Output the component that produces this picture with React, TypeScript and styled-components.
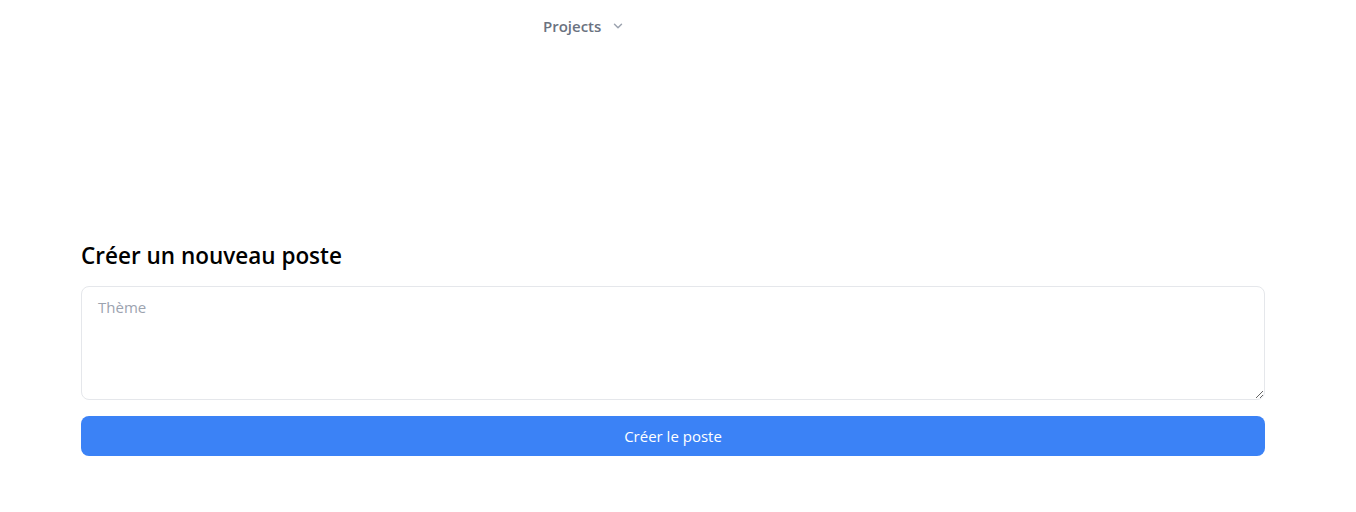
import React from "react";
import styled, { createGlobalStyle } from "styled-components";

const Global = createGlobalStyle`
  html, body { margin: 0; padding: 0; background: #ffffff; }
  body { font-family: "Open Sans", "Noto Sans", sans-serif; color: #111827; }
  * { box-sizing: border-box; }
`;

const Page = styled.div`
  width: 1356px;
  min-height: 512px;
  display: flex;
  flex-direction: column;
`;

const Nav = styled.nav`
  height: 52px;
  display: flex;
  align-items: center;
  padding-left: 543px;
`;

const NavItem = styled.button`
  display: flex;
  align-items: center;
  gap: 10px;
  background: none;
  border: none;
  padding: 0;
  font-family: inherit;
  font-size: 15px;
  font-weight: 600;
  color: #6b7280;
  cursor: pointer;
`;

const Main = styled.main`
  padding: 188px 91px 0 81px;
  display: flex;
  flex-direction: column;
`;

const Title = styled.h2`
  margin: 0 0 15px;
  font-size: 22.5px;
  font-weight: 600;
  line-height: 31px;
  color: #000000;
`;

const Form = styled.form`
  display: flex;
  flex-direction: column;
  gap: 16px;
`;

const Area = styled.textarea`
  height: 114px;
  border: 1px solid #e5e7eb;
  border-radius: 8px;
  padding: 9px 16px;
  font-family: inherit;
  font-size: 15px;
  line-height: 22px;
  color: #111827;
  outline: none;
  &::placeholder { color: #9ca3af; }
`;

const Submit = styled.button`
  height: 40px;
  border: none;
  border-radius: 8px;
  background: #3b82f6;
  color: #ffffff;
  font-family: inherit;
  font-size: 15px;
  cursor: pointer;
`;

export default function App() {
  return (
    <Page>
      <Global />
      <Nav>
        <NavItem type="button">
          Projects
          <svg width="14" height="14" viewBox="0 0 24 24" fill="none" stroke="#9ca3af" strokeWidth="2.5" strokeLinecap="round" strokeLinejoin="round">
            <path d="M6 9l6 6 6-6" />
          </svg>
        </NavItem>
      </Nav>
      <Main>
        <Title>Créer un nouveau poste</Title>
        <Form onSubmit={(e) => e.preventDefault()}>
          <Area placeholder="Thème" />
          <Submit type="submit">Créer le poste</Submit>
        </Form>
      </Main>
    </Page>
  );
}
